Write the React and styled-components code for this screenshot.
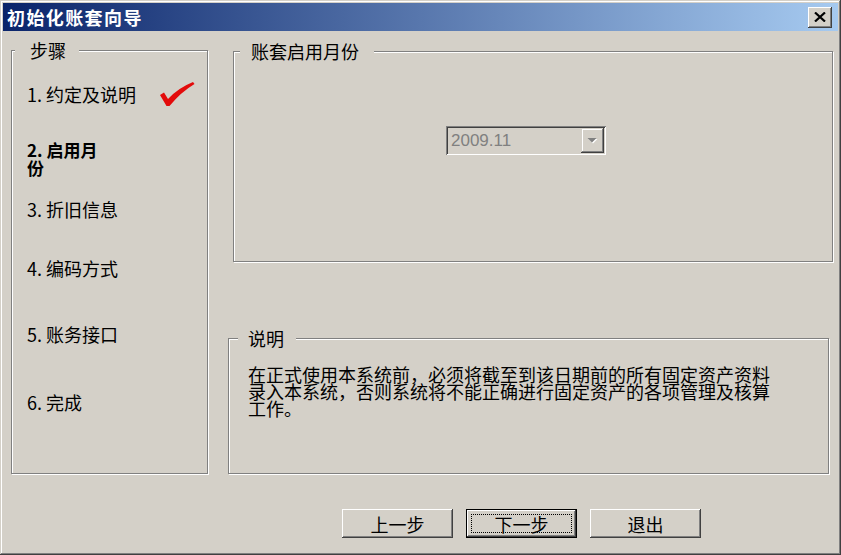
import React from "react";
import styled, { createGlobalStyle } from "styled-components";

const FONT = `"Noto Sans CJK SC", "Liberation Sans", sans-serif`;

const Global = createGlobalStyle`
  html, body { margin: 0; padding: 0; background: #d4d0c8; }
  body { font-family: ${FONT}; }
`;

const Window = styled.div`
  width: 841px;
  height: 555px;
  box-sizing: border-box;
  padding: 3px;
  background: #d4d0c8;
  display: flex;
  flex-direction: column;
  box-shadow: inset -1px -1px 0 #404040, inset 1px 1px 0 #d4d0c8,
    inset -2px -2px 0 #808080, inset 2px 2px 0 #ffffff;
  font-family: ${FONT};
  font-size: 18px;
  line-height: 18px;
  color: #000;
`;

const TitleBar = styled.div`
  flex: none;
  height: 28px;
  display: flex;
  align-items: center;
  justify-content: space-between;
  padding: 0 6px 0 4px;
  background: linear-gradient(to right, #0a246a, #a6caf0);
`;

const Title = styled.span`
  color: #fff;
  font-weight: 700;
  font-size: 18px;
  letter-spacing: 1.4px;
`;

const CloseButton = styled.button`
  width: 24px;
  height: 21px;
  padding: 0;
  border: 0;
  background: #d4d0c8;
  display: flex;
  align-items: center;
  justify-content: center;
  box-shadow: inset -1px -1px 0 #404040, inset 1px 1px 0 #ffffff,
    inset -2px -2px 0 #808080, inset 2px 2px 0 #d4d0c8;
`;

const Body = styled.div`
  flex: 1;
  display: flex;
  flex-direction: column;
  padding: 10px 0 0 8px;
`;

const Main = styled.div`
  display: flex;
  align-items: flex-start;
`;

const Group = styled.fieldset`
  margin: ${(p) => p.$m || "0"};
  padding: 0;
  min-width: 0;
  box-sizing: border-box;
  width: ${(p) => p.$w}px;
  height: ${(p) => p.$h}px;
  border: 1px solid #808080;
  box-shadow: 1px 1px 0 #ffffff, inset 1px 1px 0 #ffffff;
`;

const Legend = styled.legend`
  margin-left: ${(p) => p.$ml}px;
  padding: 0 ${(p) => p.$pr}px 0 ${(p) => p.$pl}px;
  font-size: 18px;
  line-height: 18px;
  background: #d4d0c8;
`;

const StepList = styled.div`
  display: flex;
  flex-direction: column;
  padding-left: 15px;
`;

const Step = styled.div`
  display: flex;
  align-items: center;
  margin-top: ${(p) => p.$mt}px;
  font-weight: ${(p) => (p.$active ? 700 : 400)};
  font-size: ${(p) => (p.$active ? 17 : 18)}px;
  line-height: 18px;
`;

const Check = styled.svg`
  margin: -4px 0 -4px 23px;
  flex: none;
`;

const Column = styled.div`
  display: flex;
  flex-direction: column;
  margin-left: 20px;
  width: 605px;
`;

const Combo = styled.div`
  margin: 66px 0 0 212px;
  width: 160px;
  height: 29px;
  box-sizing: border-box;
  display: flex;
  align-items: stretch;
  padding: 2px;
  background: #d4d0c8;
  box-shadow: inset 1px 1px 0 #808080, inset -1px -1px 0 #ffffff,
    inset 2px 2px 0 #404040, inset -2px -2px 0 #d4d0c8;
`;

const ComboText = styled.span`
  flex: 1;
  display: flex;
  align-items: center;
  padding-left: 3px;
  color: #808080;
  font-family: "Liberation Sans", sans-serif;
  font-size: 17px;
`;

const ComboArrow = styled.span`
  width: 23px;
  display: flex;
  align-items: center;
  justify-content: center;
  background: #d4d0c8;
  box-shadow: inset -1px -1px 0 #404040, inset 1px 1px 0 #d4d0c8,
    inset -2px -2px 0 #808080, inset 2px 2px 0 #ffffff;
`;

const Note = styled.p`
  margin: 19px 0 0 19px;
  width: 530px;
  font-size: 18px;
  line-height: 17px;
`;

const ButtonRow = styled.div`
  display: flex;
  gap: 13px;
  margin-top: 35px;
  padding-left: 331px;
`;

const Button = styled.button`
  width: 111px;
  height: 29px;
  padding: 4px;
  box-sizing: border-box;
  border: ${(p) => (p.$default ? "1px solid #000" : "0")};
  background: #d4d0c8;
  font-family: ${FONT};
  font-size: 18px;
  line-height: 18px;
  color: #000;
  display: flex;
  box-shadow: inset -1px -1px 0 #404040, inset 1px 1px 0 #ffffff,
    inset -2px -2px 0 #808080, inset 2px 2px 0 #d4d0c8;
`;

const ButtonLabel = styled.span`
  flex: 1;
  display: flex;
  align-items: center;
  justify-content: center;
  border: 1px dotted ${(p) => (p.$focus ? "#000" : "transparent")};
`;

const steps = [
  { label: "1. 约定及说明", mt: 26, done: true },
  { label: ["2. 启用月", "份"], mt: 38, active: true },
  { label: "3. 折旧信息", mt: 23 },
  { label: "4. 编码方式", mt: 41 },
  { label: "5. 账务接口", mt: 48 },
  { label: "6. 完成", mt: 50 },
];

export default function App() {
  return (
    <>
      <Global />
      <Window>
        <TitleBar>
          <Title>初始化账套向导</Title>
          <CloseButton aria-label="关闭">
            <svg width="12" height="10" viewBox="0 0 12 10">
              <path d="M1 0.5 L11 9.5 M11 0.5 L1 9.5" stroke="#000" strokeWidth="2.2" />
            </svg>
          </CloseButton>
        </TitleBar>
        <Body>
          <Main>
            <Group $w={197} $h={433}>
              <Legend $ml={3} $pl={15} $pr={13}>步骤</Legend>
              <StepList>
                {steps.map((s, i) => (
                  <Step key={i} $mt={s.mt} $active={s.active}>
                    <span>
                      {Array.isArray(s.label) ? (
                        <>
                          {s.label[0]}
                          <br />
                          {s.label[1]}
                        </>
                      ) : (
                        s.label
                      )}
                    </span>
                    {s.done && (
                      <Check width="36" height="26" viewBox="0 0 36 26">
                        <path
                          d="M1 14 L5 11.5 L9 18 Q19 7 34 1 L35.5 3 Q22 11 10.5 25 L7.5 25 Z"
                          fill="#e30b0b"
                        />
                      </Check>
                    )}
                  </Step>
                ))}
              </StepList>
            </Group>
            <Column>
              <Group $w={600} $h={220} $m="1px 0 0 5px">
                <Legend $ml={6} $pl={11} $pr={15}>账套启用月份</Legend>
                <Combo>
                  <ComboText>2009.11</ComboText>
                  <ComboArrow>
                    <svg width="11" height="7" viewBox="0 0 11 7">
                      <path d="M1.5 2 L10.5 2 L6 6.5 Z" fill="#ffffff" />
                      <path d="M0.5 1 L9.5 1 L5 5.5 Z" fill="#808080" />
                    </svg>
                  </ComboArrow>
                </Combo>
              </Group>
              <Group $w={601} $h={145} $m="67px 0 0 0">
                <Legend $ml={9} $pl={10} $pr={12}>说明</Legend>
                <Note>
                  在正式使用本系统前，必须将截至到该日期前的所有固定资产资料录入本系统，否则系统将不能正确进行固定资产的各项管理及核算工作。
                </Note>
              </Group>
            </Column>
          </Main>
          <ButtonRow>
            <Button>
              <ButtonLabel>上一步</ButtonLabel>
            </Button>
            <Button $default>
              <ButtonLabel $focus>下一步</ButtonLabel>
            </Button>
            <Button>
              <ButtonLabel>退出</ButtonLabel>
            </Button>
          </ButtonRow>
        </Body>
      </Window>
    </>
  );
}
